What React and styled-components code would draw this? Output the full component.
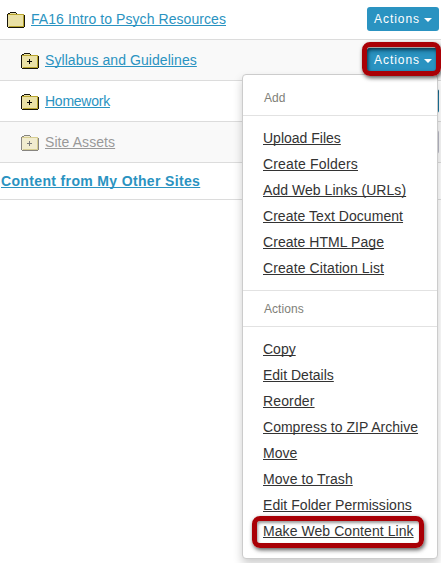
import React from "react";
import styled, { createGlobalStyle } from "styled-components";

const GlobalStyle = createGlobalStyle`
  * { box-sizing: border-box; }
  body {
    margin: 0;
    background: #fff;
    overflow: hidden;
    font-family: "Liberation Sans", Arial, sans-serif;
    font-size: 14px;
  }
`;

const Page = styled.main`
  position: relative;
  height: 563px;
  overflow: hidden;
`;

const Row = styled.div`
  display: flex;
  align-items: flex-start;
  height: ${(p) => p.$height || 41}px;
  padding: ${(p) => (p.$nested ? "8px 2px 0 21px" : "7px 2px 0 7px")};
  background: ${(p) => (p.$striped ? "#f9f9f9" : "#fff")};
  border-bottom: 1px solid #dcdcdc;
`;

const FolderSvg = styled.svg`
  flex: none;
  margin: 5px 6px 0 0;
  opacity: ${(p) => (p.$faded ? 0.5 : 1)};
`;

const ResourceLink = styled.a`
  color: ${(p) => (p.$faded ? "#999" : "#2a93c1")};
  line-height: 24px;
  letter-spacing: ${(p) => p.$spacing || 0}px;
  text-decoration: underline;
  text-decoration-thickness: 1px;
  text-decoration-skip-ink: none;
  text-underline-offset: 1px;
  white-space: nowrap;
`;

const SitesRow = styled(Row)`
  height: 37px;
  padding: 6px 1px 0;
  font-weight: bold;
`;

const ActionButton = styled.button`
  display: flex;
  align-items: center;
  gap: 4px;
  width: 72px;
  height: 24px;
  margin-left: auto;
  padding: 0 7px;
  border: 0;
  border-radius: 3px;
  background: ${(p) => (p.$faded ? "#b9b9c6" : "#2a93c1")};
  box-shadow: ${(p) => (p.$pressed ? "inset 0 2px 5px #084a68" : "none")};
  color: #fff;
  font: 12px/16px "Liberation Sans", Arial, sans-serif;
  letter-spacing: 0.96px;
`;

const Caret = styled.span`
  margin-top: 1px;
  border: 4px solid transparent;
  border-top-color: #fff;
  border-bottom: 0;
`;

const Menu = styled.section`
  position: absolute;
  left: 242px;
  top: 74px;
  width: 196px;
  height: 485px;
  border: 1px solid #ccc;
  border-radius: 4px;
  background: #fff;
  box-shadow: 0 5px 10px rgba(0, 0, 0, 0.2);
`;

const MenuHeading = styled.h2`
  display: flex;
  align-items: center;
  height: ${(p) => p.$height}px;
  margin: 0;
  padding: ${(p) => p.$top || 0}px 0 0 21px;
  border-bottom: 1px solid #e2e2e2;
  color: #808078;
  font-size: 12px;
  font-weight: normal;
  letter-spacing: 0.05px;
`;

const MenuList = styled.ul`
  height: ${(p) => p.$height}px;
  margin: 0;
  padding: 9px 0 0 20px;
  border-bottom: ${(p) => (p.$divided ? "1px solid #e2e2e2" : "0")};
  list-style: none;
`;

const MenuItem = styled.li`
  display: flex;
  align-items: center;
  height: 26px;
`;

const MenuLink = styled(ResourceLink)`
  color: #333;
`;

const Highlight = styled.div`
  position: absolute;
  left: ${(p) => p.$x}px;
  top: ${(p) => p.$y}px;
  width: ${(p) => p.$w}px;
  height: ${(p) => p.$h}px;
  border: 5px solid #a90006;
  border-radius: 8px;
  box-shadow: 1px 2px 4px rgba(0, 0, 0, 0.65), inset 1px 2px 3px rgba(0, 0, 0, 0.4);
  pointer-events: none;
`;

function Folder({ plus, faded }) {
  return (
    <FolderSvg width="18" height="16" viewBox="0 0 18 16" shapeRendering="crispEdges" $faded={faded} aria-hidden="true">
      <path d="M1 2h2V1h6v1h8v13H1z" fill="#eae1a6" />
      <path d="M0 2h1v13H0zM1 15h16v1H1zM17 3h1v12h-1zM1 1h2v1H1zM3 0h6v1H3zM9 1h1v1H9z" fill="#17140a" />
      <path d="M1 2h16v1H1zM16 3h1v12h-1zM2 14h14v1H2z" fill="#b7a42e" />
      {plus && <path d="M6 8h5v1H6zM8 6h1v5H8z" fill="#000" />}
    </FolderSvg>
  );
}

function Actions(props) {
  return (
    <ActionButton {...props}>
      Actions
      <Caret />
    </ActionButton>
  );
}

const addItems = [
  { label: "Upload Files" },
  { label: "Create Folders", spacing: 0.17 },
  { label: "Add Web Links (URLs)", spacing: 0.05 },
  { label: "Create Text Document", spacing: 0.05 },
  { label: "Create HTML Page", spacing: 0.06 },
  { label: "Create Citation List", spacing: 0.1 },
];

const actionItems = [
  { label: "Copy" },
  { label: "Edit Details" },
  { label: "Reorder", spacing: 0.14 },
  { label: "Compress to ZIP Archive", spacing: 0.02 },
  { label: "Move" },
  { label: "Move to Trash", spacing: 0.08 },
  { label: "Edit Folder Permissions", spacing: 0.04 },
  { label: "Make Web Content Link", spacing: 0.07 },
];

function Items({ items, ...rest }) {
  return (
    <MenuList {...rest}>
      {items.map(({ label, spacing }) => (
        <MenuItem key={label}>
          <MenuLink $spacing={spacing}>{label}</MenuLink>
        </MenuItem>
      ))}
    </MenuList>
  );
}

export default function App() {
  return (
    <Page>
      <GlobalStyle />
      <Row $height={40}>
        <Folder />
        <ResourceLink $spacing={0.07}>FA16 Intro to Psych Resources</ResourceLink>
        <Actions />
      </Row>
      <Row $nested $striped>
        <Folder plus />
        <ResourceLink $spacing={0.07}>Syllabus and Guidelines</ResourceLink>
        <Actions $pressed />
      </Row>
      <Row $nested>
        <Folder plus />
        <ResourceLink $spacing={-0.25}>Homework</ResourceLink>
        <Actions $pressed />
      </Row>
      <Row $nested $striped>
        <Folder plus faded />
        <ResourceLink $faded $spacing={0.08}>Site Assets</ResourceLink>
        <Actions $faded />
      </Row>
      <SitesRow>
        <ResourceLink $spacing={0.35}>Content from My Other Sites</ResourceLink>
      </SitesRow>
      <Menu>
        <MenuHeading $height={41} $top={5}>Add</MenuHeading>
        <Items items={addItems} $height={175} $divided />
        <MenuHeading $height={36}>Actions</MenuHeading>
        <Items items={actionItems} $height={230} />
      </Menu>
      <Highlight $x={362} $y={42} $w={79} $h={34} />
      <Highlight $x={252} $y={516} $w={172} $h={32} />
    </Page>
  );
}
